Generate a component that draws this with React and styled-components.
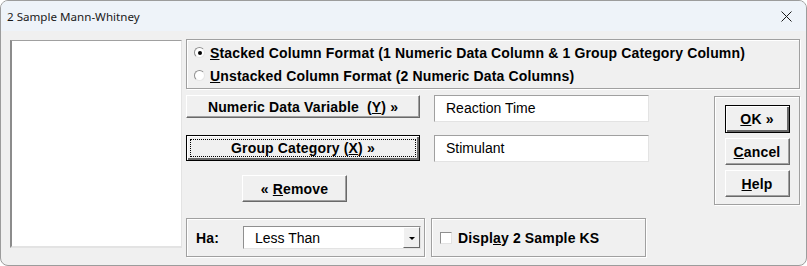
import styled, { createGlobalStyle, css } from 'styled-components';

const GlobalStyle = createGlobalStyle`
  html, body {
    margin: 0;
    padding: 0;
    background: #ffffff;
  }
  * {
    box-sizing: border-box;
  }
`;

const Window = styled.div`
  width: 807px;
  height: 266px;
  border: 1px solid #9c9c9c;
  border-radius: 8px;
  overflow: hidden;
  background: #f0f0f0;
  display: flex;
  flex-direction: column;
  font-family: 'Liberation Sans', Arial, sans-serif;
  font-size: 14px;
  letter-spacing: 0.15px;
  font-weight: bold;
  color: #000;
`;

const TitleBar = styled.div`
  height: 30px;
  background: #eef3f9;
  display: flex;
  align-items: center;
  justify-content: space-between;
  padding: 0 14px 0 6px;
  font-family: 'Noto Sans', 'Open Sans', sans-serif;
  font-weight: normal;
  font-size: 11.6px;
  letter-spacing: 0;
  color: #1a1a1a;
`;

const Body = styled.div`
  flex: 1;
  display: flex;
  gap: 4px;
  padding: 8px 0 0 9px;
`;

const ListBox = styled.div`
  width: 172px;
  height: 208px;
  margin-top: 1px;
  background: #fff;
  border-top: 1px solid #a0a0a0;
  border-left: 2px solid #8c8c8c;
  border-right: 1px solid #e3e3e3;
  border-bottom: 2px solid #e3e3e3;
`;

const RightColumn = styled.div`
  width: 614px;
  display: flex;
  flex-direction: column;
`;

const etched = css`
  border: 1px solid #a0a0a0;
  box-shadow: inset 1px 1px 0 #fff, 1px 1px 0 #fff;
`;

const RadioGroup = styled.div`
  ${etched};
  height: 50px;
  display: flex;
  flex-direction: column;
  justify-content: center;
  gap: 5px;
  padding-left: 7px;
`;

const RadioRow = styled.label`
  display: flex;
  align-items: center;
  gap: 5px;
  height: 18px;
  white-space: nowrap;
`;

const RadioDot = styled.span`
  width: 11px;
  height: 11px;
  border-radius: 50%;
  background: #fff;
  border: 1px solid #8f8f8f;
  border-right-color: #e6e6e6;
  border-bottom-color: #e6e6e6;
  display: flex;
  align-items: center;
  justify-content: center;
  &::after {
    content: '';
    width: 4px;
    height: 4px;
    border-radius: 50%;
    background: ${(p) => (p.$checked ? '#000' : 'transparent')};
  }
`;

const Middle = styled.div`
  display: flex;
  justify-content: space-between;
  margin-top: 6px;
`;

const FieldGrid = styled.div`
  display: grid;
  grid-template-columns: 234px 215px;
  grid-template-rows: 27px 27px 27px;
  column-gap: 14px;
  row-gap: 13px;
  align-items: start;
`;

const Button = styled.button`
  font: inherit;
  letter-spacing: inherit;
  color: #000;
  background: #f0f0f0;
  width: ${(p) => p.$w || 'auto'};
  height: ${(p) => p.$h || '23px'};
  margin-left: ${(p) => p.$ml || '0'};
  padding: 0;
  white-space: pre;
  display: flex;
  align-items: center;
  justify-content: center;
  border: 1px solid;
  border-color: #fff #696969 #696969 #fff;
  box-shadow: inset -1px -1px 0 #a0a0a0;
  ${(p) =>
    p.$default &&
    css`
      border: 1px solid #000;
      box-shadow: inset 1px 1px 0 #fff, inset -2px -2px 0 #696969;
    `}
  ${(p) =>
    p.$focus &&
    css`
      outline: 1px dotted #000;
      outline-offset: -5px;
    `}
`;

const TextBox = styled.div`
  height: 27px;
  background: #fff;
  border: 1px solid;
  border-color: #a0a0a0 #e3e3e3 #e3e3e3 #a0a0a0;
  font-weight: normal;
  letter-spacing: 0;
  padding: 4px 0 0 11px;
`;

const ButtonPanel = styled.div`
  ${etched};
  width: 86px;
  height: 109px;
  margin-top: 1px;
  display: flex;
  flex-direction: column;
  align-items: center;
  padding-top: 8px;
  gap: 5px;
`;

const BottomRow = styled.div`
  display: flex;
  gap: 6px;
  margin-top: 13px;
`;

const Group = styled.div`
  ${etched};
  width: ${(p) => p.$w};
  height: 39px;
  display: flex;
  align-items: center;
  padding-left: ${(p) => p.$pl || '8px'};
`;

const HaLabel = styled.span`
  width: 47px;
`;

const Combo = styled.div`
  width: 178px;
  height: 23px;
  background: #fff;
  border: 1px solid;
  border-color: #8f8f8f #e3e3e3 #e3e3e3 #8f8f8f;
  display: flex;
  align-items: center;
  justify-content: space-between;
  font-weight: normal;
  letter-spacing: 0;
  padding-left: 11px;
`;

const ComboArrow = styled.span`
  width: 17px;
  height: 21px;
  background: #f0f0f0;
  border: 1px solid;
  border-color: #fff #696969 #696969 #fff;
  display: flex;
  align-items: center;
  justify-content: center;
  &::after {
    content: '';
    border-left: 3px solid transparent;
    border-right: 3px solid transparent;
    border-top: 3px solid #000;
    margin-top: 2px;
  }
`;

const CheckBox = styled.span`
  width: 12px;
  height: 12px;
  background: #fff;
  border: 1px solid;
  border-color: #8f8f8f #e3e3e3 #e3e3e3 #8f8f8f;
  margin-right: 6px;
`;

export default function App() {
  return (
    <>
      <GlobalStyle />
      <Window>
        <TitleBar>
          <span>2 Sample Mann-Whitney</span>
          <svg width="11" height="11" viewBox="0 0 11 11">
            <path d="M0.5 0.5 L10.5 10.5 M10.5 0.5 L0.5 10.5" stroke="#1a1a1a" strokeWidth="1" />
          </svg>
        </TitleBar>
        <Body>
          <ListBox />
          <RightColumn>
            <RadioGroup>
              <RadioRow>
                <RadioDot $checked />
                <span>
                  <u>S</u>tacked Column Format (1 Numeric Data Column &amp; 1 Group Category Column)
                </span>
              </RadioRow>
              <RadioRow>
                <RadioDot />
                <span>
                  <u>U</u>nstacked Column Format (2 Numeric Data Columns)
                </span>
              </RadioRow>
            </RadioGroup>
            <Middle>
              <FieldGrid>
                <Button $h="23px">
                  Numeric Data Variable  (<u>Y</u>) »
                </Button>
                <TextBox>Reaction Time</TextBox>
                <Button $h="26px" $default $focus>
                  Group Category (<u>X</u>) »
                </Button>
                <TextBox>Stimulant</TextBox>
                <Button $w="105px" $h="27px" $ml="56px">
                  « <u>R</u>emove
                </Button>
              </FieldGrid>
              <ButtonPanel>
                <Button $w="65px" $h="28px" $default>
                  <u>O</u>K »
                </Button>
                <Button $w="65px" $h="27px">
                  <u>C</u>ancel
                </Button>
                <Button $w="65px" $h="27px">
                  <u>H</u>elp
                </Button>
              </ButtonPanel>
            </Middle>
            <BottomRow>
              <Group $w="239px" $pl="9px">
                <HaLabel>Ha:</HaLabel>
                <Combo>
                  <span>Less Than</span>
                  <ComboArrow />
                </Combo>
              </Group>
              <Group $w="215px" $pl="8px">
                <CheckBox />
                <span>
                  Displ<u>a</u>y 2 Sample KS
                </span>
              </Group>
            </BottomRow>
          </RightColumn>
        </Body>
      </Window>
    </>
  );
}
